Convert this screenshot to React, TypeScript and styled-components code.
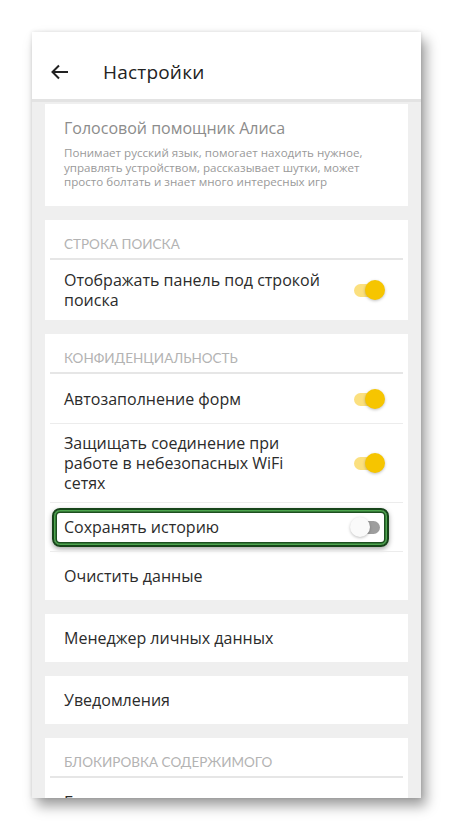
import React from "react";
import styled, { createGlobalStyle } from "styled-components";

const Global = createGlobalStyle`
  html, body { margin: 0; padding: 0; background: #ffffff; }
  body { font-family: "Open Sans", Roboto, sans-serif; }
  * { box-sizing: border-box; }
`;

const Page = styled.div`
  width: 453px;
  height: 831px;
  padding: 32px 32px 0 32px;
  background: #ffffff;
`;

const Phone = styled.div`
  width: 389px;
  height: 766px;
  background: #efefef;
  overflow: hidden;
  box-shadow: 5px 8px 12px rgba(0, 0, 0, 0.38), 0 0 4px rgba(0, 0, 0, 0.12);
  display: flex;
  flex-direction: column;
`;

const Header = styled.div`
  flex: none;
  height: 70px;
  padding-top: 13px;
  background: #ffffff;
  border-bottom: 3px solid #e3e3e3;
  display: flex;
  align-items: center;
`;

const BackButton = styled.div`
  width: 24px;
  height: 24px;
  margin-left: 16px;
  color: #222;
  display: flex;
`;

const Title = styled.div`
  margin-left: 31px;
  font-size: 19px;
  color: #222;
  letter-spacing: 0.2px;
`;

const List = styled.div`
  padding: 2px 13px 0;
  display: flex;
  flex-direction: column;
  gap: 14px;
`;

const Card = styled.div`
  background: #ffffff;
  display: flex;
  flex-direction: column;
`;

const AliceCard = styled(Card)`
  height: 102px;
  padding: 14px 19px 0;
`;

const AliceTitle = styled.div`
  font-size: 16px;
  line-height: 20px;
  color: #8c8c8c;
`;

const AliceDesc = styled.div`
  margin-top: 8px;
  font-size: 11.6px;
  line-height: 14.5px;
  color: #9a9a9a;
  max-width: 300px;
`;

const SectionHeader = styled.div`
  height: 40px;
  margin: 0 5px;
  padding: 16px 14px 0;
  font-family: Lato, "Open Sans", sans-serif;
  font-size: 13.5px;
  line-height: 16px;
  color: #b3b3b3;
  text-transform: uppercase;
  border-bottom: 2px solid #e6e6e6;
`;

const Row = styled.div<{ $h: number; $divider?: boolean }>`
  position: relative;
  height: ${(p) => p.$h}px;
  margin: 0 5px;
  padding: 0 14px;
  display: flex;
  align-items: center;
  justify-content: space-between;
  border-top: ${(p) => (p.$divider ? "1px solid #ececec" : "none")};
`;

const RowText = styled.div`
  font-size: 16px;
  line-height: 20px;
  color: #2b2b2b;
  max-width: 260px;
`;

const Toggle = styled.div`
  position: relative;
  flex: none;
  width: 36px;
  height: 20px;
  margin-right: 3px;
`;

const Track = styled.div<{ $on: boolean }>`
  position: absolute;
  left: 4px;
  right: 6px;
  top: 4px;
  height: 13px;
  border-radius: 7px;
  background: ${(p) => (p.$on ? "#fbe07f" : "#9e9e9e")};
`;

const Knob = styled.div<{ $on: boolean }>`
  position: absolute;
  top: 0;
  left: ${(p) => (p.$on ? "15px" : "0px")};
  width: 20px;
  height: 20px;
  border-radius: 50%;
  background: ${(p) => (p.$on ? "#f6c500" : "#fafafa")};
  box-shadow: 0 1px 3px rgba(0, 0, 0, 0.25);
`;

const Highlight = styled.div`
  position: absolute;
  left: 2px;
  right: 14px;
  top: 5px;
  bottom: 4px;
  border: 2px solid #17451a;
  border-radius: 8px;
  box-shadow: inset 0 0 0 1.5px #4ea64f, inset 0 0 0 3px #1d4f20,
    0 2px 5px rgba(0, 0, 0, 0.35);
  pointer-events: none;
`;

const Switch = ({ on }: { on: boolean }) => (
  <Toggle>
    <Track $on={on} />
    <Knob $on={on} />
  </Toggle>
);

export default function App() {
  return (
    <Page>
      <Global />
      <Phone>
        <Header>
          <BackButton>
            <svg width="24" height="24" viewBox="0 0 24 24" fill="none">
              <path
                d="M20 12H4.5M11 5.5L4.5 12l6.5 6.5"
                stroke="currentColor"
                strokeWidth="2"
              />
            </svg>
          </BackButton>
          <Title>Настройки</Title>
        </Header>
        <List>
          <AliceCard>
            <AliceTitle>Голосовой помощник Алиса</AliceTitle>
            <AliceDesc>
              Понимает русский язык, помогает находить нужное, управлять
              устройством, рассказывает шутки, может просто болтать и знает
              много интересных игр
            </AliceDesc>
          </AliceCard>

          <Card>
            <SectionHeader>Строка поиска</SectionHeader>
            <Row $h={60}>
              <RowText>Отображать панель под строкой поиска</RowText>
              <Switch on />
            </Row>
          </Card>

          <Card>
            <SectionHeader>Конфиденциальность</SectionHeader>
            <Row $h={49}>
              <RowText>Автозаполнение форм</RowText>
              <Switch on />
            </Row>
            <Row $h={79} $divider>
              <RowText>
                Защищать соединение при работе в небезопасных WiFi сетях
              </RowText>
              <Switch on />
            </Row>
            <Row $h={49} $divider>
              <RowText>Сохранять историю</RowText>
              <Switch on={false} />
              <Highlight />
            </Row>
            <Row $h={49} $divider>
              <RowText>Очистить данные</RowText>
            </Row>
          </Card>

          <Card>
            <Row $h={48}>
              <RowText>Менеджер личных данных</RowText>
            </Row>
          </Card>

          <Card>
            <Row $h={48}>
              <RowText>Уведомления</RowText>
            </Row>
          </Card>

          <Card>
            <SectionHeader>Блокировка содержимого</SectionHeader>
            <Row $h={48}>
              <RowText>Блокировка рекламы</RowText>
            </Row>
          </Card>
        </List>
      </Phone>
    </Page>
  );
}
